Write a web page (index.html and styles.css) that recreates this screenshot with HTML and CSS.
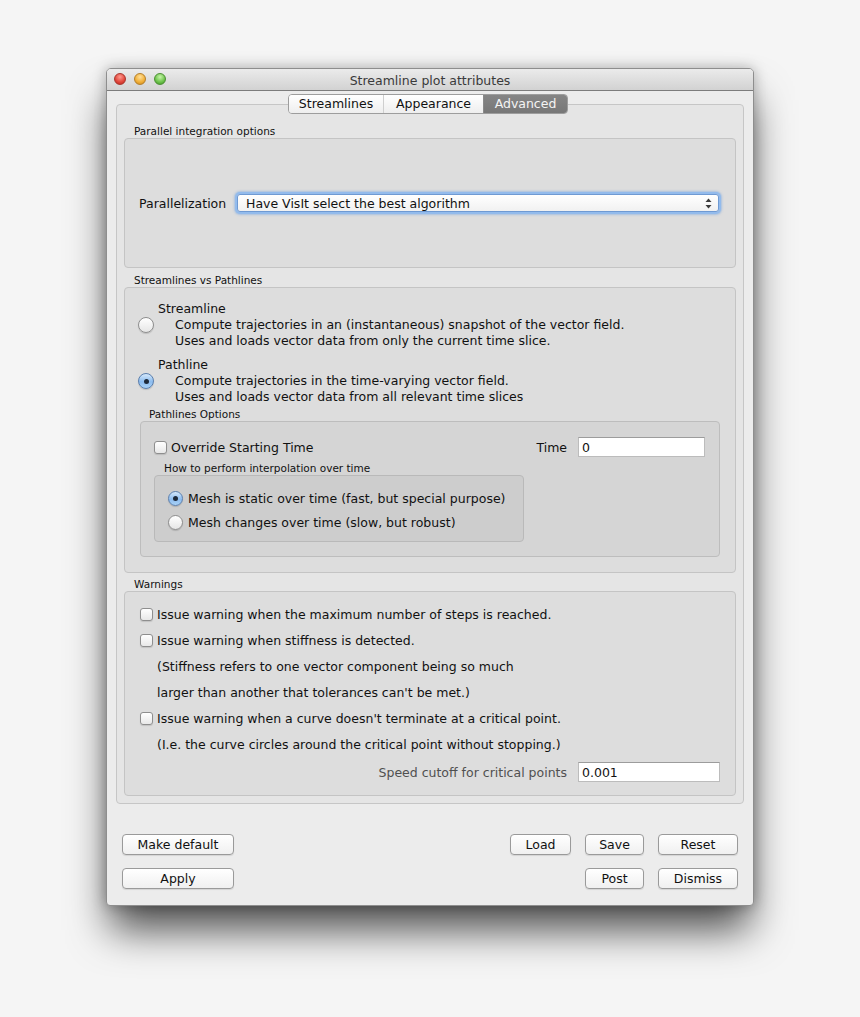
FILE: index.html
```html
<!DOCTYPE html>
<html lang="en">
<head>
    <meta charset="UTF-8">
    <meta name="viewport" content="width=device-width, initial-scale=1.0">
    <title>Streamline plot attributes</title>
    <link rel="stylesheet" href="styles.css">
</head>
<body>

<div class="window">
    <div class="titlebar">
        <div class="lights">
            <span class="light red"></span>
            <span class="light yellow"></span>
            <span class="light green"></span>
        </div>
        <div class="title">Streamline plot attributes</div>
        <div></div>
    </div>

    <div class="content">
        <div class="tabs">
            <span class="tab tab-streamlines">Streamlines</span>
            <span class="tab tab-appearance">Appearance</span>
            <span class="tab tab-advanced active">Advanced</span>
        </div>

        <div class="pane">
            <!-- Parallel integration -->
            <div class="group-title">Parallel integration options</div>
            <div class="group group-parallel">
                <span class="combo-label">Parallelization</span>
                <div class="combo">
                    <span>Have VisIt select the best algorithm</span>
                    <svg class="combo-arrows" width="7" height="11" viewBox="0 0 7 11">
                        <path d="M3.5 0.5 L6.5 4 L0.5 4 Z" fill="#3a3a3a"/>
                        <path d="M3.5 10.5 L6.5 7 L0.5 7 Z" fill="#3a3a3a"/>
                    </svg>
                </div>
            </div>

            <!-- Streamlines vs Pathlines -->
            <div class="group-title gap-5">Streamlines vs Pathlines</div>
            <div class="group group-lines">
                <div class="option">
                    <span class="radio"></span>
                    <div class="option-text">
                        <div>Streamline</div>
                        <div class="desc">Compute trajectories in an (instantaneous) snapshot of the vector field.</div>
                        <div class="desc">Uses and loads vector data from only the current time slice.</div>
                    </div>
                </div>
                <div class="option option-second">
                    <span class="radio checked"></span>
                    <div class="option-text">
                        <div>Pathline</div>
                        <div class="desc">Compute trajectories in the time-varying vector field.</div>
                        <div class="desc">Uses and loads vector data from all relevant time slices</div>
                    </div>
                </div>

                <div class="group-title sub-title">Pathlines Options</div>
                <div class="group group-pathlines">
                    <div class="override-row">
                        <span class="checkbox"></span>
                        <span class="override-label">Override Starting Time</span>
                        <span class="time-label">Time</span>
                        <input class="field time-field" type="text" value="0">
                    </div>
                    <div class="group-title interp-title">How to perform interpolation over time</div>
                    <div class="group group-interp">
                        <div class="interp-row">
                            <span class="radio small checked"></span>
                            <span>Mesh is static over time (fast, but special purpose)</span>
                        </div>
                        <div class="interp-row">
                            <span class="radio small"></span>
                            <span>Mesh changes over time (slow, but robust)</span>
                        </div>
                    </div>
                </div>
            </div>

            <!-- Warnings -->
            <div class="group-title gap-4">Warnings</div>
            <div class="group group-warnings">
                <div class="warn-row"><span class="checkbox"></span>Issue warning when the maximum number of steps is reached.</div>
                <div class="warn-row"><span class="checkbox"></span>Issue warning when stiffness is detected.</div>
                <div class="warn-row note">(Stiffness refers to one vector component being so much</div>
                <div class="warn-row note">larger than another that tolerances can't be met.)</div>
                <div class="warn-row"><span class="checkbox"></span>Issue warning when a curve doesn't terminate at a critical point.</div>
                <div class="warn-row note">(I.e. the curve circles around the critical point without stopping.)</div>
                <div class="speed-row">
                    <span class="speed-label">Speed cutoff for critical points</span>
                    <input class="field speed-field" type="text" value="0.001">
                </div>
            </div>
        </div>

        <div class="buttons">
            <div class="button-row">
                <button class="btn btn-wide">Make default</button>
                <div class="button-group">
                    <button class="btn btn-load">Load</button>
                    <button class="btn btn-mid">Save</button>
                    <button class="btn btn-end">Reset</button>
                </div>
            </div>
            <div class="button-row">
                <button class="btn btn-wide">Apply</button>
                <div class="button-group">
                    <button class="btn btn-mid">Post</button>
                    <button class="btn btn-end">Dismiss</button>
                </div>
            </div>
        </div>
    </div>
</div>

</body>
</html>
```

FILE: styles.css
```css
body {
    margin: 0;
    padding: 68px 0 0 106px;
    min-height: 1017px;
    box-sizing: border-box;
    background-color: #f5f5f5;
    font-family: "DejaVu Sans", Verdana, sans-serif;
    font-size: 12.5px;
    color: #111;
}

.window {
    width: 646px;
    height: 836px;
    border: 1px solid #8e8e8e;
    border-radius: 5px 5px 4px 4px;
    background-color: #ececec;
    box-shadow: 0 28px 40px -4px rgba(0, 0, 0, 0.68), 0 0 14px rgba(0, 0, 0, 0.28);
    overflow: hidden;
}

/* Title bar */
.titlebar {
    height: 21px;
    display: grid;
    grid-template-columns: 1fr auto 1fr;
    align-items: center;
    background: linear-gradient(#ebebeb, #d2d2d2);
    border-bottom: 1px solid #7c7c7c;
}

.lights {
    display: flex;
    gap: 8px;
    padding-left: 7px;
    margin-top: -2px;
}

.light {
    width: 12px;
    height: 12px;
    border-radius: 50%;
    box-sizing: border-box;
}

.light.red {
    background: radial-gradient(circle at 50% 30%, #ff9a8f, #e0453a 60%, #b8261d);
    border: 1px solid #a8352c;
}

.light.yellow {
    background: radial-gradient(circle at 50% 30%, #ffe09a, #f0ae36 60%, #c7841a);
    border: 1px solid #b47f2a;
}

.light.green {
    background: radial-gradient(circle at 50% 30%, #c6f5a8, #6cc24b 60%, #3f9224);
    border: 1px solid #4c8f34;
}

.title {
    color: #3a3a3a;
    margin-top: 1px;
}

/* Tabs */
.content {
    padding-top: 3px;
}

.tabs {
    display: flex;
    margin: 0 auto -10px;
    width: max-content;
    position: relative;
    z-index: 1;
    border: 1px solid #9d9d9d;
    border-radius: 4px;
    overflow: hidden;
    transform: translateX(-2px);
}

.tab {
    height: 18px;
    line-height: 18px;
    text-align: center;
    background: linear-gradient(#ffffff, #eeeeee);
    color: #111;
}

.tab-streamlines {
    width: 94px;
    border-right: 1px solid #cfcfcf;
}

.tab-appearance {
    width: 99px;
}

.tab-advanced {
    width: 83px;
    border-left: 1px solid #8a8a8a;
}

.tab.active {
    background: linear-gradient(#858585, #777777);
    color: #f4f4f4;
}

.pane {
    margin: 0 9px;
    height: 700px;
    box-sizing: border-box;
    padding: 19px 7px 0;
    border: 1px solid #c6c6c6;
    border-radius: 4px;
    background-color: #e5e5e5;
}

/* Group boxes */
.group-title {
    height: 14px;
    line-height: 14px;
    font-size: 10.5px;
    padding-left: 10px;
    color: #111;
}

.group-title.gap-5 {
    margin-top: 5px;
}

.group-title.gap-4 {
    margin-top: 4px;
}

.group {
    box-sizing: border-box;
    border: 1px solid #c4c4c4;
    border-radius: 4px;
    background-color: #dddddd;
}

.group-parallel {
    height: 130px;
    display: flex;
    align-items: center;
    padding-left: 14px;
}

.combo-label {
    width: 98px;
}

.combo {
    flex: 1;
    margin-right: 16px;
    height: 18px;
    box-sizing: border-box;
    display: flex;
    align-items: center;
    justify-content: space-between;
    padding: 0 6px 0 8px;
    border: 1px solid #6f9ad3;
    border-radius: 3px;
    background: linear-gradient(#ffffff, #f1f1f1);
    box-shadow: 0 0 0 2px #93bbec, 0 0 2px 3px rgba(120, 165, 225, 0.5);
}

.combo-arrows {
    display: block;
}

.group-lines {
    height: 286px;
    padding-top: 13px;
}

.option {
    display: flex;
    align-items: center;
    height: 48px;
    line-height: 16px;
}

.option-second {
    margin-top: 8px;
}

.option .radio {
    margin-left: 13px;
}

.option-text {
    margin-left: 4px;
}

.option-text .desc {
    padding-left: 17px;
}

.radio {
    width: 16px;
    height: 16px;
    box-sizing: border-box;
    border-radius: 50%;
    border: 1px solid #8e8e8e;
    background: linear-gradient(#ffffff, #e6e6e6);
    box-shadow: 0 1px 1px rgba(0, 0, 0, 0.15);
    display: flex;
    align-items: center;
    justify-content: center;
    flex-shrink: 0;
}

.radio.small {
    width: 15px;
    height: 15px;
}

.radio.checked {
    border-color: #5a7fae;
    background: linear-gradient(#d6e9fb, #8cbcef 55%, #a9d1f6);
}

.radio.checked::after {
    content: "";
    width: 5px;
    height: 5px;
    border-radius: 50%;
    background-color: #1e2a3a;
}

.checkbox {
    width: 13px;
    height: 13px;
    box-sizing: border-box;
    border: 1px solid #8e8e8e;
    border-radius: 3px;
    background: linear-gradient(#ffffff, #e8e8e8);
    box-shadow: 0 1px 1px rgba(0, 0, 0, 0.12);
    flex-shrink: 0;
}

.sub-title {
    margin-top: 2px;
    padding-left: 24px;
}

.group-pathlines {
    margin: 0 15px;
    height: 136px;
    padding-top: 15px;
    background-color: #d5d5d5;
    border-color: #bdbdbd;
}

.override-row {
    height: 20px;
    display: flex;
    align-items: center;
    padding: 0 14px 0 13px;
}

.override-label {
    margin-left: 4px;
    flex: 1;
}

.field {
    box-sizing: border-box;
    height: 20px;
    border: 1px solid #bcbcbc;
    border-top-color: #9c9c9c;
    background-color: #fff;
    font-family: "DejaVu Sans", Verdana, sans-serif;
    font-size: 12.5px;
    padding: 0 3px;
    margin: 0;
    color: #111;
}

.time-field {
    width: 127px;
    margin-left: 11px;
}

.interp-title {
    margin-top: 4px;
    padding-left: 23px;
}

.group-interp {
    margin-left: 13px;
    width: 370px;
    height: 67px;
    padding-top: 10px;
    background-color: #cdcdcd;
    border-color: #b9b9b9;
}

.interp-row {
    height: 24px;
    display: flex;
    align-items: center;
    padding-left: 13px;
    gap: 5px;
}

.group-warnings {
    height: 205px;
    padding-top: 9px;
}

.warn-row {
    height: 26px;
    display: flex;
    align-items: center;
    padding-left: 15px;
}

.warn-row .checkbox {
    margin-right: 4px;
}

.warn-row.note {
    padding-left: 32px;
}

.speed-row {
    margin-top: 2px;
    height: 26px;
    display: flex;
    align-items: center;
    justify-content: flex-end;
    padding-right: 15px;
}

.speed-label {
    color: #505050;
}

.speed-field {
    width: 142px;
    margin-left: 11px;
}

/* Bottom buttons */
.buttons {
    padding: 30px 15px 0;
    display: flex;
    flex-direction: column;
    gap: 13px;
}

.button-row {
    display: flex;
    justify-content: space-between;
}

.button-group {
    display: flex;
    gap: 14px;
}

.btn {
    height: 21px;
    box-sizing: border-box;
    border: 1px solid #9a9a9a;
    border-radius: 4px;
    background: linear-gradient(#ffffff, #f0f0f0);
    box-shadow: 0 1px 1px rgba(0, 0, 0, 0.1);
    font-family: "DejaVu Sans", Verdana, sans-serif;
    font-size: 12.5px;
    color: #111;
    padding: 0;
}

.btn-wide {
    width: 112px;
}

.btn-load {
    width: 61px;
}

.btn-mid {
    width: 59px;
}

.btn-end {
    width: 80px;
}
```
